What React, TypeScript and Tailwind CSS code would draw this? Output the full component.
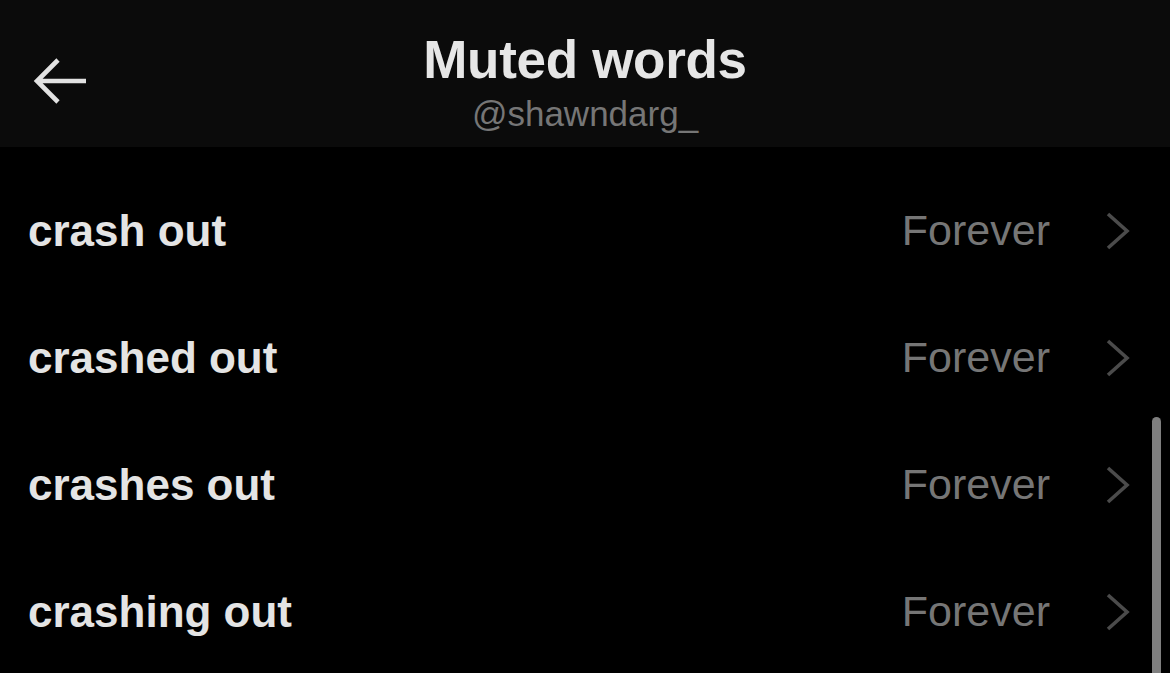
const words = ["crash out", "crashed out", "crashes out", "crashing out"];

function BackArrow() {
  return (
    <svg width="56" height="48" viewBox="0 0 56 48" fill="none">
      <path
        d="M53 24H5M25 3L4 24L25 45"
        stroke="#e2e2e2"
        strokeWidth="4.6"
        strokeLinecap="butt"
        strokeLinejoin="miter"
      />
    </svg>
  );
}

function Chevron() {
  return (
    <svg width="28" height="40" viewBox="0 0 28 40" fill="none">
      <path
        d="M2 3L21 20L2 37"
        stroke="#4b4b4b"
        strokeWidth="3.6"
        strokeLinecap="butt"
        strokeLinejoin="miter"
      />
    </svg>
  );
}

export default function App() {
  return (
    <div className="relative h-[673px] w-[1170px] overflow-hidden bg-black font-['Liberation_Sans',Arial,sans-serif]">
      <header className="relative flex h-[147px] flex-col items-center bg-[#0b0b0b]">
        <div className="absolute left-[33px] top-[57px]">
          <BackArrow />
        </div>
        <h1 className="mt-[30px] text-[53px] font-bold leading-[60px] tracking-[-0.3px] text-[#e6e6e6]">
          Muted words
        </h1>
        <p className="text-[35px] leading-[48px] text-[#767676]">
          @shawndarg_
        </p>
      </header>

      <ul className="pt-[20px]">
        {words.map((word) => (
          <li
            key={word}
            className="flex h-[127px] items-center justify-between pl-[28px] pr-[36px]"
          >
            <span className="text-[44px] font-bold text-[#e4e4e4]">{word}</span>
            <span className="flex items-center gap-[56px]">
              <span className="text-[43px] text-[#767676]">Forever</span>
              <Chevron />
            </span>
          </li>
        ))}
      </ul>

      <div className="absolute left-[1152px] top-[417px] h-[270px] w-[9px] rounded-full bg-[#7f7f7f]" />
    </div>
  );
}
